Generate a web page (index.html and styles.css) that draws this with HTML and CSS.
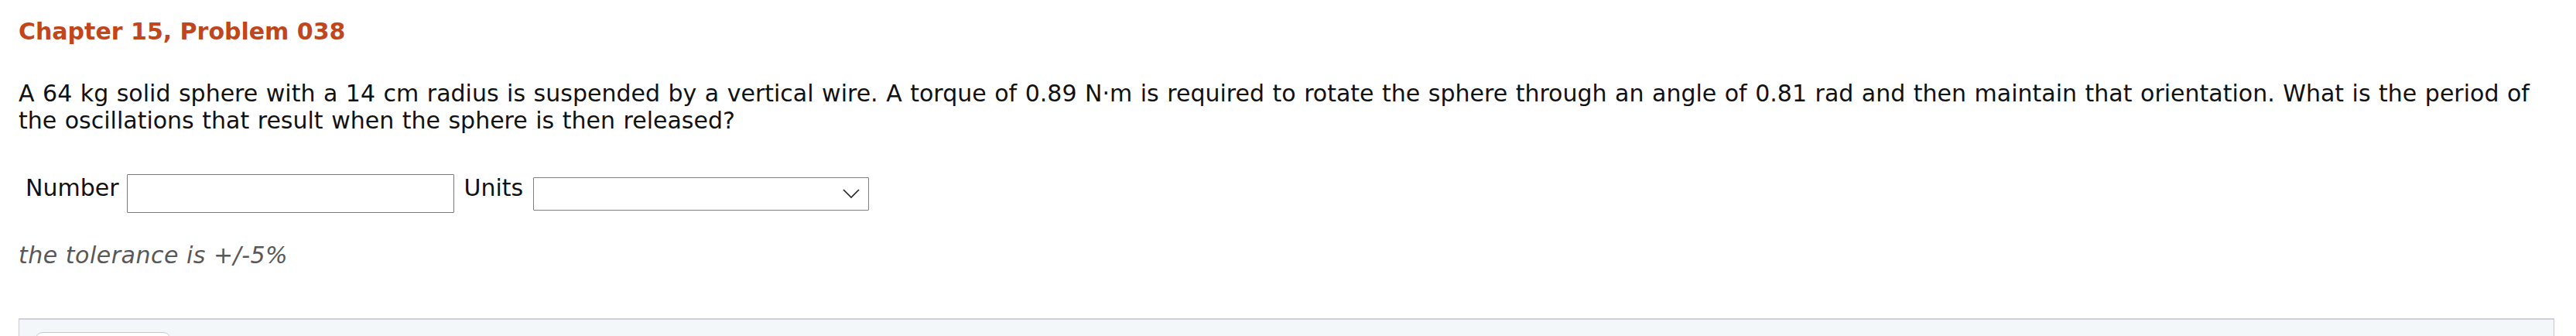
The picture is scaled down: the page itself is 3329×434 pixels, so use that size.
FILE: index.html
```html
<!DOCTYPE html>
<html lang="en">
<head>
    <meta charset="UTF-8">
    <meta name="viewport" content="width=device-width, initial-scale=1.0">
    <title>Chapter 15, Problem 038</title>
    <link rel="stylesheet" href="styles.css">
</head>
<body>

<div class="problem">
    <h2 class="title">Chapter 15, Problem 038</h2>

    <p class="question">A 64 kg solid sphere with a 14 cm radius is suspended by a vertical wire. A torque of 0.89 N·m is required to rotate the sphere through an angle of 0.81 rad and then maintain that orientation. What is the period of the oscillations that result when the sphere is then released?</p>

    <div class="answer-row">
        <label class="lbl lbl-number" for="number">Number</label>
        <input type="text" id="number" class="num-input">
        <label class="lbl lbl-units" for="units">Units</label>
        <div class="select-wrap">
            <select id="units" class="units-select">
                <option value=""></option>
            </select>
            <svg class="chevron" width="22" height="12" viewBox="0 0 22 12">
                <polyline points="1,1 11,11 21,1" fill="none" stroke="#1e1e1e" stroke-width="1.6"/>
            </svg>
        </div>
    </div>

    <p class="tolerance">the tolerance is +/-5%</p>

    <div class="hint-box">
        <button type="button" class="hint-btn"></button>
    </div>
</div>

</body>
</html>
```

FILE: styles.css
```css
body {
    margin: 0;
    background-color: #ffffff;
    font-family: "DejaVu Sans", Verdana, sans-serif;
    font-size: 30px;
    color: #111;
}
.problem {
    padding: 23px 28px 0 24px;
}
.title {
    margin: 0;
    font-size: 30px;
    line-height: 35px;
    font-weight: bold;
    color: #c1461c;
}
.question {
    margin: 45px 0 0 0;
    line-height: 35px;
    word-spacing: 1px;
}
.answer-row {
    display: flex;
    align-items: flex-start;
    margin-top: 52px;
    padding-left: 9px;
}
.lbl {
    line-height: 35px;
    color: #111;
}
.lbl-number {
    margin-right: 10px;
}
.lbl-units {
    margin: 0 13px 0 13px;
}
.num-input {
    box-sizing: border-box;
    width: 423px;
    height: 50px;
    margin: 0;
    border: 1px solid #7a7a7a;
    border-radius: 1px;
    padding: 4px 8px;
    font-family: inherit;
    font-size: 30px;
    background: #fff;
}
.select-wrap {
    position: relative;
    margin-top: 4px;
}
.units-select {
    box-sizing: border-box;
    display: block;
    width: 434px;
    height: 43px;
    margin: 0;
    border: 1px solid #808080;
    border-radius: 1px;
    background: #fff;
    appearance: none;
    -webkit-appearance: none;
    font-family: inherit;
    font-size: 26px;
}
.chevron {
    position: absolute;
    right: 12px;
    top: 15px;
    pointer-events: none;
}
.tolerance {
    margin: 37px 0 0 0;
    line-height: 35px;
    font-style: italic;
    letter-spacing: 0.5px;
    color: #585858;
}
.hint-box {
    margin-top: 64px;
    height: 60px;
    background-color: #f4f7fa;
    border: 1px solid #c9c9cf;
    border-top: 2px solid #cfd0d7;
    padding: 16px 20px 0 20px;
}
.hint-btn {
    display: block;
    width: 176px;
    height: 40px;
    background: #fff;
    border: 1px solid #c8c8c8;
    border-radius: 10px;
}
```
